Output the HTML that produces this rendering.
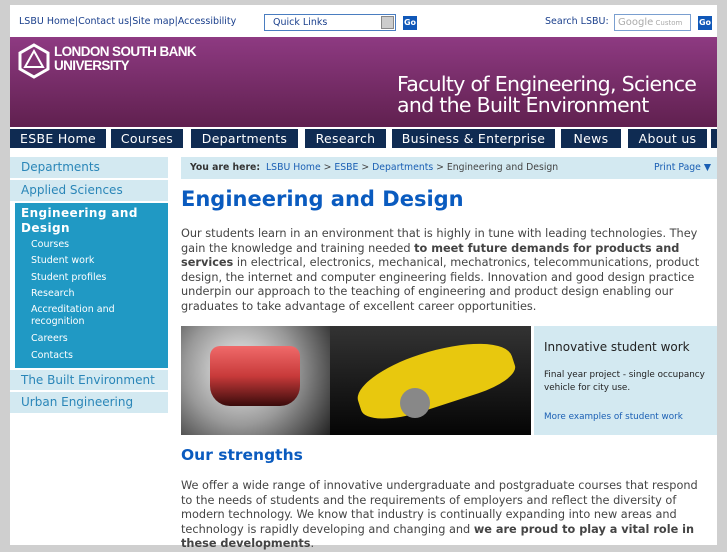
<!DOCTYPE html>
<html><head><meta charset="utf-8"><style>
*{margin:0;padding:0;box-sizing:border-box}
body{width:727px;height:545px;background:#cfcfcf;font-family:"DejaVu Sans","Liberation Sans",sans-serif;overflow:hidden;position:relative}
.page{position:absolute;left:10px;top:5px;width:707px;height:540px;background:#fff}
.a{position:absolute}
a{color:#1a5fb4;text-decoration:none}
.top{font-size:9.5px;color:#1a3f8c}
.nav div{position:absolute;top:129px;height:19px;background:#0f2b52;color:#fff;font-size:12.5px;text-align:center;line-height:19px;letter-spacing:.3px}
.side{position:absolute;left:10px;width:158px;background:#d3e9f1;color:#2a86b8;font-size:12px;padding-left:11px}
.sub{font-size:9.5px;color:#fff;padding-left:10px;line-height:16.3px}
p.t{font-size:11.3px;line-height:14.5px;color:#444}
</style></head><body>
<div class="page"></div>
<div class="a top" style="left:19px;top:16px">LSBU Home<span style="color:#1a3f8c">|</span>Contact us<span>|</span>Site map<span>|</span>Accessibility</div>
<div class="a" style="left:264px;top:14px;width:132px;height:17px;border:1px solid #4a7dc0;font-size:9.5px;padding:2px 8px;color:#1a3f8c">Quick Links<div class="a" style="right:1px;top:1px;width:13px;height:13px;background:#ccc;border:1px solid #888"></div></div>
<div class="a" style="left:403px;top:16px;width:14px;height:14px;background:#1058b8;color:#fff;font-size:8px;font-weight:bold;text-align:center;line-height:14px">Go</div>
<div class="a top" style="left:545px;top:16px">Search LSBU:</div>
<div class="a" style="left:614px;top:14px;width:77px;height:17px;border:1px solid #7a9fd0;font-size:10px;color:#aaa;padding:2px 3px">Google<span style="font-size:7px"> Custom</span></div>
<div class="a" style="left:698px;top:16px;width:14px;height:14px;background:#1058b8;color:#fff;font-size:8px;font-weight:bold;text-align:center;line-height:14px">Go</div>
<div class="a" style="left:10px;top:37px;width:707px;height:90px;background:linear-gradient(#8e3a82,#60204f)"></div>
<svg class="a" style="left:16px;top:43px" width="36" height="36" viewBox="0 0 36 36"><polygon points="18,2 32,10 32,26 18,34 4,26 4,10" fill="none" stroke="#fff" stroke-width="3"/><polygon points="18,8 27,24 9,24" fill="none" stroke="#fff" stroke-width="2"/></svg>
<div class="a" style="left:54px;top:45px;color:#fff;font-family:'Liberation Sans',sans-serif;font-weight:bold;font-size:13.5px;line-height:14px;letter-spacing:-.6px">LONDON SOUTH BANK<br>UNIVERSITY</div>
<div class="a" style="left:397px;top:74px;color:#fff;font-family:'DejaVu Sans',sans-serif;font-size:20.5px;line-height:21px;letter-spacing:-.7px;font-weight:500">Faculty of Engineering, Science<br>and the Built Environment</div>
<div class="nav">
<div style="left:10px;width:96px">ESBE Home</div>
<div style="left:111px;width:72px">Courses</div>
<div style="left:191px;width:107px">Departments</div>
<div style="left:305px;width:81px">Research</div>
<div style="left:392px;width:163px">Business &amp; Enterprise</div>
<div style="left:561px;width:60px">News</div>
<div style="left:628px;width:79px">About us</div>
<div style="left:711px;width:6px"></div>
</div>
<div class="side" style="top:157px;height:21px;line-height:21px">Departments</div>
<div class="side" style="top:180px;height:21px;line-height:21px">Applied Sciences</div>
<div class="side" style="top:203px;left:15px;width:153px;height:165px;background:#2099c4;padding-left:6px;color:#fff">
<div style="font-weight:bold;font-size:12px;line-height:14.5px;padding-top:3px;letter-spacing:.4px">Engineering and<br>Design</div>
<div class="sub" style="margin-top:2px">Courses<br>Student work<br>Student profiles<br>Research<br>Accreditation and<div style="line-height:13px;margin-top:-3px;margin-bottom:3px">recognition</div>Careers<br>Contacts</div></div>
<div class="side" style="top:370px;height:20px;line-height:20px">The Built Environment</div>
<div class="side" style="top:392px;height:21px;line-height:21px">Urban Engineering</div>
<div class="a" style="left:181px;top:157px;width:536px;height:22px;background:#d3e9f1;font-size:9.3px;line-height:22px;padding-left:9px;color:#444"><b style="color:#333">You are here:</b>&nbsp; <a>LSBU Home</a> &gt; <a>ESBE</a> &gt; <a>Departments</a> &gt; Engineering and Design<span style="position:absolute;right:6px;color:#1a5fb4">Print Page ▼</span></div>
<div class="a" style="left:181px;top:187px;font-size:21px;font-weight:bold;color:#0a5bbf">Engineering and Design</div>
<p class="a t" style="left:181px;top:227px;width:530px">Our students learn in an environment that is highly in tune with leading technologies. They gain the knowledge and training needed <b>to meet future demands for products and services</b> in electrical, electronics, mechanical, mechatronics, telecommunications, product design, the internet and computer engineering fields. Innovation and good design practice underpin our approach to the teaching of engineering and product design enabling our graduates to take advantage of excellent career opportunities.</p>
<div class="a" style="left:181px;top:326px;width:149px;height:109px;background:radial-gradient(circle at 40% 40%,#f4f4f4,#999 50%,#222)"><div class="a" style="left:29px;top:20px;width:90px;height:60px;border-radius:10px 10px 20px 20px;background:linear-gradient(#f06a6a,#c83a3a 50%,#3a0b0b)"></div></div>
<div class="a" style="left:330px;top:326px;width:201px;height:109px;background:linear-gradient(#333,#050505)"><div class="a" style="left:25px;top:25px;width:160px;height:55px;border-radius:50% 60% 30% 40%;background:#e8c80e;transform:rotate(-18deg)"></div><div class="a" style="left:70px;top:62px;width:30px;height:30px;border-radius:50%;background:#888"></div></div>
<div class="a" style="left:534px;top:326px;width:183px;height:109px;background:#d3e9f1;padding:14px 10px;color:#222">
<div style="font-size:12px">Innovative student work</div>
<div style="font-size:8.8px;line-height:12.5px;margin-top:15px">Final year project - single occupancy vehicle for city use.</div>
<div style="font-size:8.8px;margin-top:18px;color:#1a5fb4">More examples of student work</div></div>
<div class="a" style="left:181px;top:446px;font-size:15.5px;font-weight:bold;color:#0a5bbf">Our strengths</div>
<p class="a t" style="left:181px;top:479px;width:530px">We offer a wide range of innovative undergraduate and postgraduate courses that respond to the needs of students and the requirements of employers and reflect the diversity of modern technology. We know that industry is continually expanding into new areas and technology is rapidly developing and changing and <b>we are proud to play a vital role in these developments</b>.</p>
</body></html>
